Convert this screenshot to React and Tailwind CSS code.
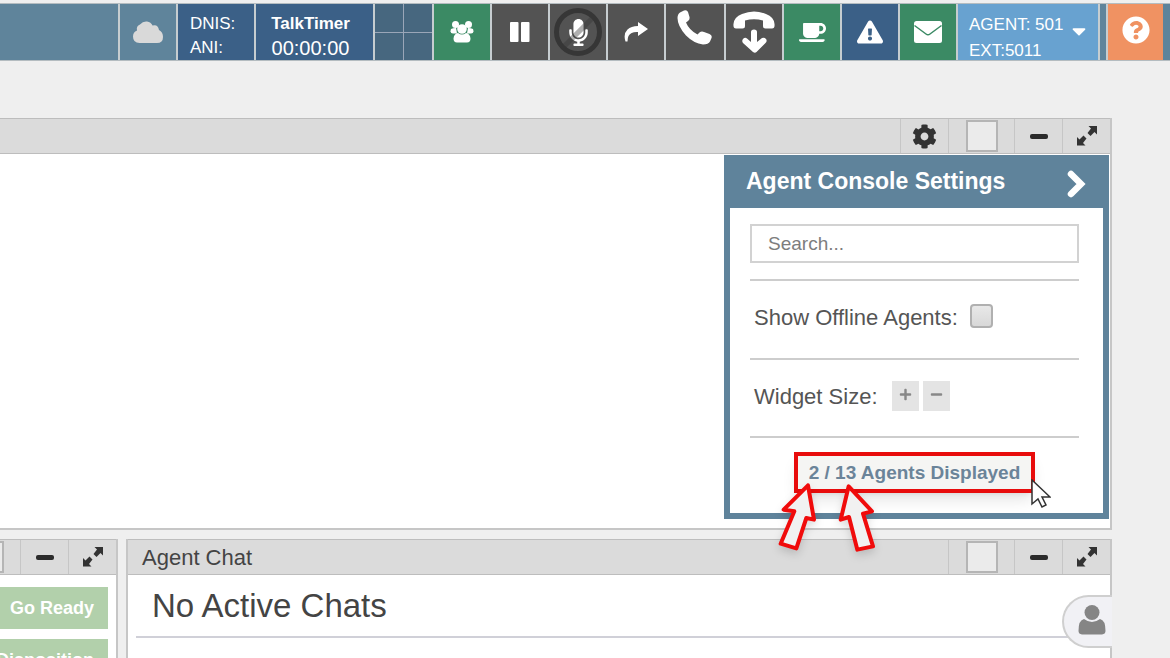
import React from 'react';
import { FaCoffee, FaCog, FaMicrophone, FaMinus, FaPlus, FaQuestionCircle, FaExclamationTriangle, FaCaretDown } from 'react-icons/fa';

const CloudIcon = () => (
    <svg viewBox="0 0 30 22" className="h-[22px] w-[30px] text-[#d9d9d9]" fill="currentColor">
        <path d="M6.500 22 Q0 22 0 15.500 Q0 11 4 9.500 Q3 5 7 3.500 Q10 0 14 0.500 Q18 1 19.500 4.500 Q25 3 26 9 Q30 11 30 16 Q30 22 24 22Z" />
    </svg>
);

const UsersIcon = () => (
    <svg viewBox="0 0 24 22" className="w-6 h-[22px]" fill="currentColor">
        <circle cx="5.500" cy="3.500" r="3.500" />
        <circle cx="18.500" cy="3.500" r="3.500" />
        <path d="M1 8 Q3 7 6 7 L7 12.500 H3 Q-0.500 12.500 1 8Z" />
        <path d="M23 8 Q21 7 18 7 L17 12.500 H21 Q24.500 12.500 23 8Z" />
        <circle cx="12" cy="8" r="4.800" />
        <path d="M3.500 17.500 Q4 12.500 8 12 Q12 15 16 12 Q20 12.500 20.500 17.500 Q20.500 21.500 17 21.500 H7 Q3.500 21.500 3.500 17.500Z" />
    </svg>
);

const PauseIcon = () => (
    <svg viewBox="0 0 20 20" className="h-5 w-5" fill="currentColor">
        <rect x="0" y="0" width="8.500" height="20" rx="1" />
        <rect x="11" y="0" width="8.500" height="20" rx="1" />
    </svg>
);

const ShareIcon = () => (
    <svg viewBox="0 0 24 22" className="w-6 h-[22px]" fill="currentColor">
        <path d="M14 1 L24 8 L14 15 V11 Q7 10.500 4.500 15 Q3.500 17 3.500 20.500 H1.500 Q-1 13 3.500 8.500 Q7 5 14 5Z" />
    </svg>
);

const PhoneIcon = () => (
    <svg viewBox="0 0 36 36" className="w-9 h-9" fill="currentColor">
        <path d="M3 2.500 L7 0.500 Q10 -0.500 11 2 L12.500 7 Q13 9.500 11 11 L9 12.500 Q12 20 20.500 24.500 L22.500 22.500 Q24.500 21 27 22 L32.500 24 Q35.500 25.500 34.500 28 L33 31.500 Q31.500 34.500 26 34.500 Q17 33.500 9 25.500 Q0.500 16 0.500 8 Q0.500 4 3 2.500Z" />
    </svg>
);

const HangUpIcon = () => (
    <svg viewBox="0 0 42 44" className="w-[42px] h-11" fill="currentColor">
        <path d="M0.500 14 Q1 7 9 4 Q21 -1 33 4 Q41 7 41.500 14 Q42 18.500 39 18.500 L32.500 18.500 Q30 18.500 30 16 L30 10.500 Q21 8 12 10.500 L12 16 Q12 18.500 9.500 18.500 L3 18.500 Q0 18.500 0.500 14Z" />
        <path d="M18 22 Q18 19.500 21 19.500 Q24 19.500 24 22 V32 L29 28 Q31.500 27 33 29 Q34.500 31 32.500 33 L23.500 42 Q22 43.500 20 42 L10 33 Q8.500 31 10 29 Q12 27 14 28.500 L18 32Z" />
    </svg>
);

const MailIcon = () => (
    <svg viewBox="0 0 28 22" className="h-[22px] w-7" fill="currentColor">
        <rect width="28" height="22" rx="2.500" />
        <path d="M0.500 4.500 L12 13 Q14 14.500 16 13 L27.500 4.500" fill="none" stroke="#3b8a64" strokeWidth="1.500" />
    </svg>
);

const ExpandIcon = () => (
    <svg viewBox="0 0 20 20" className="w-5 h-5" fill="currentColor">
        <path d="M11.500 0 H20 V8.500 L17.500 6 L13.500 10 L10.500 7 L14 2.500Z" />
        <path d="M8.500 19.500 H0 V11 L2.500 13.500 L6.500 9.500 L9.500 12.500 L6 17Z" />
    </svg>
);

const UserIcon = () => (
    <svg viewBox="0 0 28 30" className="w-7 h-[30px]" fill="currentColor">
        <circle cx="14" cy="7.500" r="7.500" />
        <path d="M6 14 Q14 20 22 14 Q27.500 15 27.500 26 Q27.500 29 24 29.500 H4 Q0.500 29 0.500 26 Q0.500 15 6 14Z" />
    </svg>
);

const ToolButton = ({ label, color, width = 'w-[58px]', children }) => (
    <button
        aria-label={label}
        className={`${width} ${color} flex items-center justify-center shrink-0 border-l-2 border-[#c6cdd0] text-white`}
    >
        {children}
    </button>
);

const Toolbar = () => (
    <header className="flex h-[58px] shrink-0 border-t border-b border-[#b4bcc0] bg-[#5f849b] text-white">
        <div className="flex-1" />
        <ToolButton label="Connection" color="bg-[#5f849b]"><CloudIcon /></ToolButton>
        <div className="w-[78px] shrink-0 border-l-2 border-[#c6cdd0] bg-[#3b6087] pl-3 pt-2 text-[17px] leading-6">
            <div>DNIS:</div>
            <div>ANI:</div>
        </div>
        <div className="w-[119px] shrink-0 border-l-2 border-[#c6cdd0] bg-[#3b6087] pt-2 pr-2 text-center leading-6">
            <div className="text-[17px] font-bold">TalkTimer</div>
            <div className="text-[20px]">00:00:00</div>
        </div>
        <div className="grid w-[59px] shrink-0 grid-cols-2 grid-rows-2 gap-px border-l-2 border-[#c6cdd0] bg-[#9aa6b8]">
            <div className="bg-[#47677f]" />
            <div className="bg-[#47677f]" />
            <div className="bg-[#47677f]" />
            <div className="bg-[#47677f]" />
        </div>
        <ToolButton label="Conference" color="bg-[#3b8a64]"><UsersIcon /></ToolButton>
        <ToolButton label="Hold" color="bg-[#535353]"><PauseIcon /></ToolButton>
        <ToolButton label="Mute" color="bg-[#535353]">
            <span className="relative flex h-12 w-12 items-center justify-center rounded-full border-[5px] border-[#363636]">
                <FaMicrophone size={27} />
                <span className="absolute h-[5px] w-10 -rotate-45 bg-[#363636]/40" />
            </span>
        </ToolButton>
        <ToolButton label="Transfer" color="bg-[#535353]"><ShareIcon /></ToolButton>
        <ToolButton label="Call" color="bg-[#535353]" width="w-[60px]">
            <span className="pb-2"><PhoneIcon /></span>
        </ToolButton>
        <ToolButton label="Hang up" color="bg-[#535353]"><HangUpIcon /></ToolButton>
        <ToolButton label="Break" color="bg-[#3b8a64]"><FaCoffee size={27} /></ToolButton>
        <ToolButton label="Alert" color="bg-[#3b6087]"><FaExclamationTriangle size={26} /></ToolButton>
        <ToolButton label="Messages" color="bg-[#3b8a64]"><MailIcon /></ToolButton>
        <button className="flex w-[142px] shrink-0 gap-1 border-l-2 border-[#c6cdd0] bg-[#68a2d0] pl-[11px] pt-2 text-left text-[17px] leading-[26px]">
            <span>AGENT: 501<br />EXT:5011</span>
            <FaCaretDown size={22} className="mt-2" />
        </button>
        <div className="w-2 shrink-0 border-l-2 border-[#c6cdd0]" />
        <ToolButton label="Help" color="bg-[#f09262]" width="w-[57px]">
            <FaQuestionCircle size={28} className="mb-1" />
        </ToolButton>
        <div className="w-[7px] shrink-0" />
    </header>
);

const PanelHeader = ({ title, settings }) => (
    <div className="flex h-9 shrink-0 items-stretch justify-end border-y border-[#bdbdbd] bg-[#dbdbdb] text-[#333]">
        {title && <h2 className="flex-1 pl-[14px] text-[22px] leading-9 text-[#444]">{title}</h2>}
        {settings && (
            <button aria-label="Settings" className="flex w-12 shrink-0 items-center justify-center border-l border-[#c6c6c6]">
                <FaCog size={25} />
            </button>
        )}
        <div className="flex w-[66px] shrink-0 items-center justify-center border-l border-[#c6c6c6]">
            <button aria-label="Panel color" className="h-8 w-8 border-2 border-[#b5b5b5] bg-[#ebebeb]" />
        </div>
        <button aria-label="Minimize" className="flex w-12 shrink-0 items-center justify-center border-l border-[#c6c6c6]">
            <span className="h-[5px] w-[18px] rounded-xs bg-[#2b2b2b]" />
        </button>
        <button aria-label="Expand" className="flex w-12 shrink-0 items-center justify-center border-l border-[#c6c6c6]">
            <ExpandIcon />
        </button>
    </div>
);

const Annotation = () => (
    <svg viewBox="180 430 300 210" className="absolute -left-5 top-[27px] h-[70px] w-[100px] drop-shadow-lg" fill="#f1f1f1" stroke="#f00b0b" strokeWidth="12" strokeLinejoin="round">
        <path d="M270 437 L197 510 L229 515 L188 612 L235 626 L265 535 L288 540Z" />
        <path d="M392 440 L462 515 L435 522 L465 620 L418 630 L393 532 L368 540Z" />
    </svg>
);

const Cursor = () => (
    <svg viewBox="0 0 20 30" className="absolute -right-5 top-[23px] h-[30px] w-5" fill="#fff" stroke="#333" strokeWidth="1.500">
        <path d="M1 1 V25 L7 20 L11 28 L15 26 L11 18 H19Z" />
    </svg>
);

const SettingsPanel = () => (
    <section className="w-[385px] border-[6px] border-t-0 border-[#5f839b] bg-white text-[#555]">
        <div className="flex h-[53px] items-center justify-between bg-[#5f839b] pl-4 pr-4 text-white">
            <h2 className="text-[23px] font-bold">Agent Console Settings</h2>
            <button aria-label="Close settings">
                <svg viewBox="0 0 20 30" className="mt-1 h-[30px] w-5" fill="none" stroke="currentColor" strokeWidth="6.500" strokeLinecap="round">
                    <path d="M4 5 L14 15 L4 25" />
                </svg>
            </button>
        </div>
        <div className="pr-6 pl-5 pt-4">
            <input
                type="text"
                aria-label="Search agents"
                placeholder="Search..."
                className="block h-[39px] w-full border-2 border-[#d2d2d2] px-4 text-[19px] placeholder:text-[#7d7d7d]"
            />
            <div className="mt-4 flex h-[79px] items-center gap-3 border-t-2 border-[#cdcdcd] pb-1 pl-1 text-[22px]">
                <label htmlFor="offline">Show Offline Agents:</label>
                <input
                    id="offline"
                    type="checkbox"
                    className="mb-1 h-6 w-[23px] appearance-none rounded-sm border-2 border-[#b0b0b0] bg-linear-to-b from-[#e8e8e8] to-[#d8d8d8]"
                />
            </div>
            <div className="flex h-[78px] items-center border-t-2 border-[#cdcdcd] pb-1 pl-1 text-[22px]">
                <span className="pr-[14px]">Widget Size:</span>
                <button aria-label="Larger" className="mr-1 flex h-[30px] w-[27px] items-center justify-center bg-[#e4e4e4] pb-1 text-[#888]">
                    <FaPlus size={13} />
                </button>
                <button aria-label="Smaller" className="flex h-[30px] w-[27px] items-center justify-center bg-[#e4e4e4] pb-1 text-[#888]">
                    <FaMinus size={13} />
                </button>
            </div>
            <div className="flex h-[77px] justify-center border-t-2 border-[#cdcdcd] pt-[14px]">
                <div className="relative h-[41px] w-[241px] shrink-0 border-4 border-[#e80c0c] bg-[#f5f5f3] text-center text-[19px] leading-[33px] font-bold text-[#6b8499] shadow-lg">
                    2 / 13 Agents Displayed
                    <Annotation />
                    <Cursor />
                </div>
            </div>
        </div>
    </section>
);

export default function App() {
    return (
        <div className="flex h-screen flex-col overflow-hidden bg-[#efefef] pt-[3px] font-['Liberation_Sans',Arial,sans-serif]">
            <Toolbar />
            <main className="mr-[58px] mt-[57px] flex flex-1 flex-col gap-[9px]">
                <section className="relative z-10 shrink-0 border-r-2 border-b-2 border-[#c6c6c6] bg-white">
                    <PanelHeader settings />
                    <div className="flex justify-end pb-[9px] pr-px pt-px">
                        <SettingsPanel />
                    </div>
                </section>
                <div className="flex flex-1 gap-2">
                    <section className="w-[118px] shrink-0 overflow-hidden border-r-2 border-[#c6c6c6] bg-white">
                        <PanelHeader />
                        <div className="flex flex-col gap-[10px] pr-2 pt-3 text-[18px] font-bold text-white">
                            <button className="h-[42px] bg-[#b2d0ab] pr-[14px] text-right">Go Ready</button>
                            <button className="flex h-[42px] items-center justify-end bg-[#b2d0ab] pr-[14px]">Disposition</button>
                        </div>
                    </section>
                    <section className="relative flex flex-1 flex-col border-x-2 border-[#c6c6c6] bg-white">
                        <PanelHeader title="Agent Chat" />
                        <div className="flex-1 pl-2 text-[#444]">
                            <p className="h-[63px] border-b-2 border-[#d0d0d8] pl-4 text-[33px] leading-[62px]">No Active Chats</p>
                        </div>
                        <button aria-label="Contacts" className="absolute -right-[2px] top-14 flex h-[53px] w-[50px] items-center justify-center rounded-l-full border-2 border-r-0 border-[#cfcfcf] bg-[#f1f1f5] pb-1 pl-2 text-[#858585]">
                            <UserIcon />
                        </button>
                    </section>
                </div>
            </main>
        </div>
    );
}
